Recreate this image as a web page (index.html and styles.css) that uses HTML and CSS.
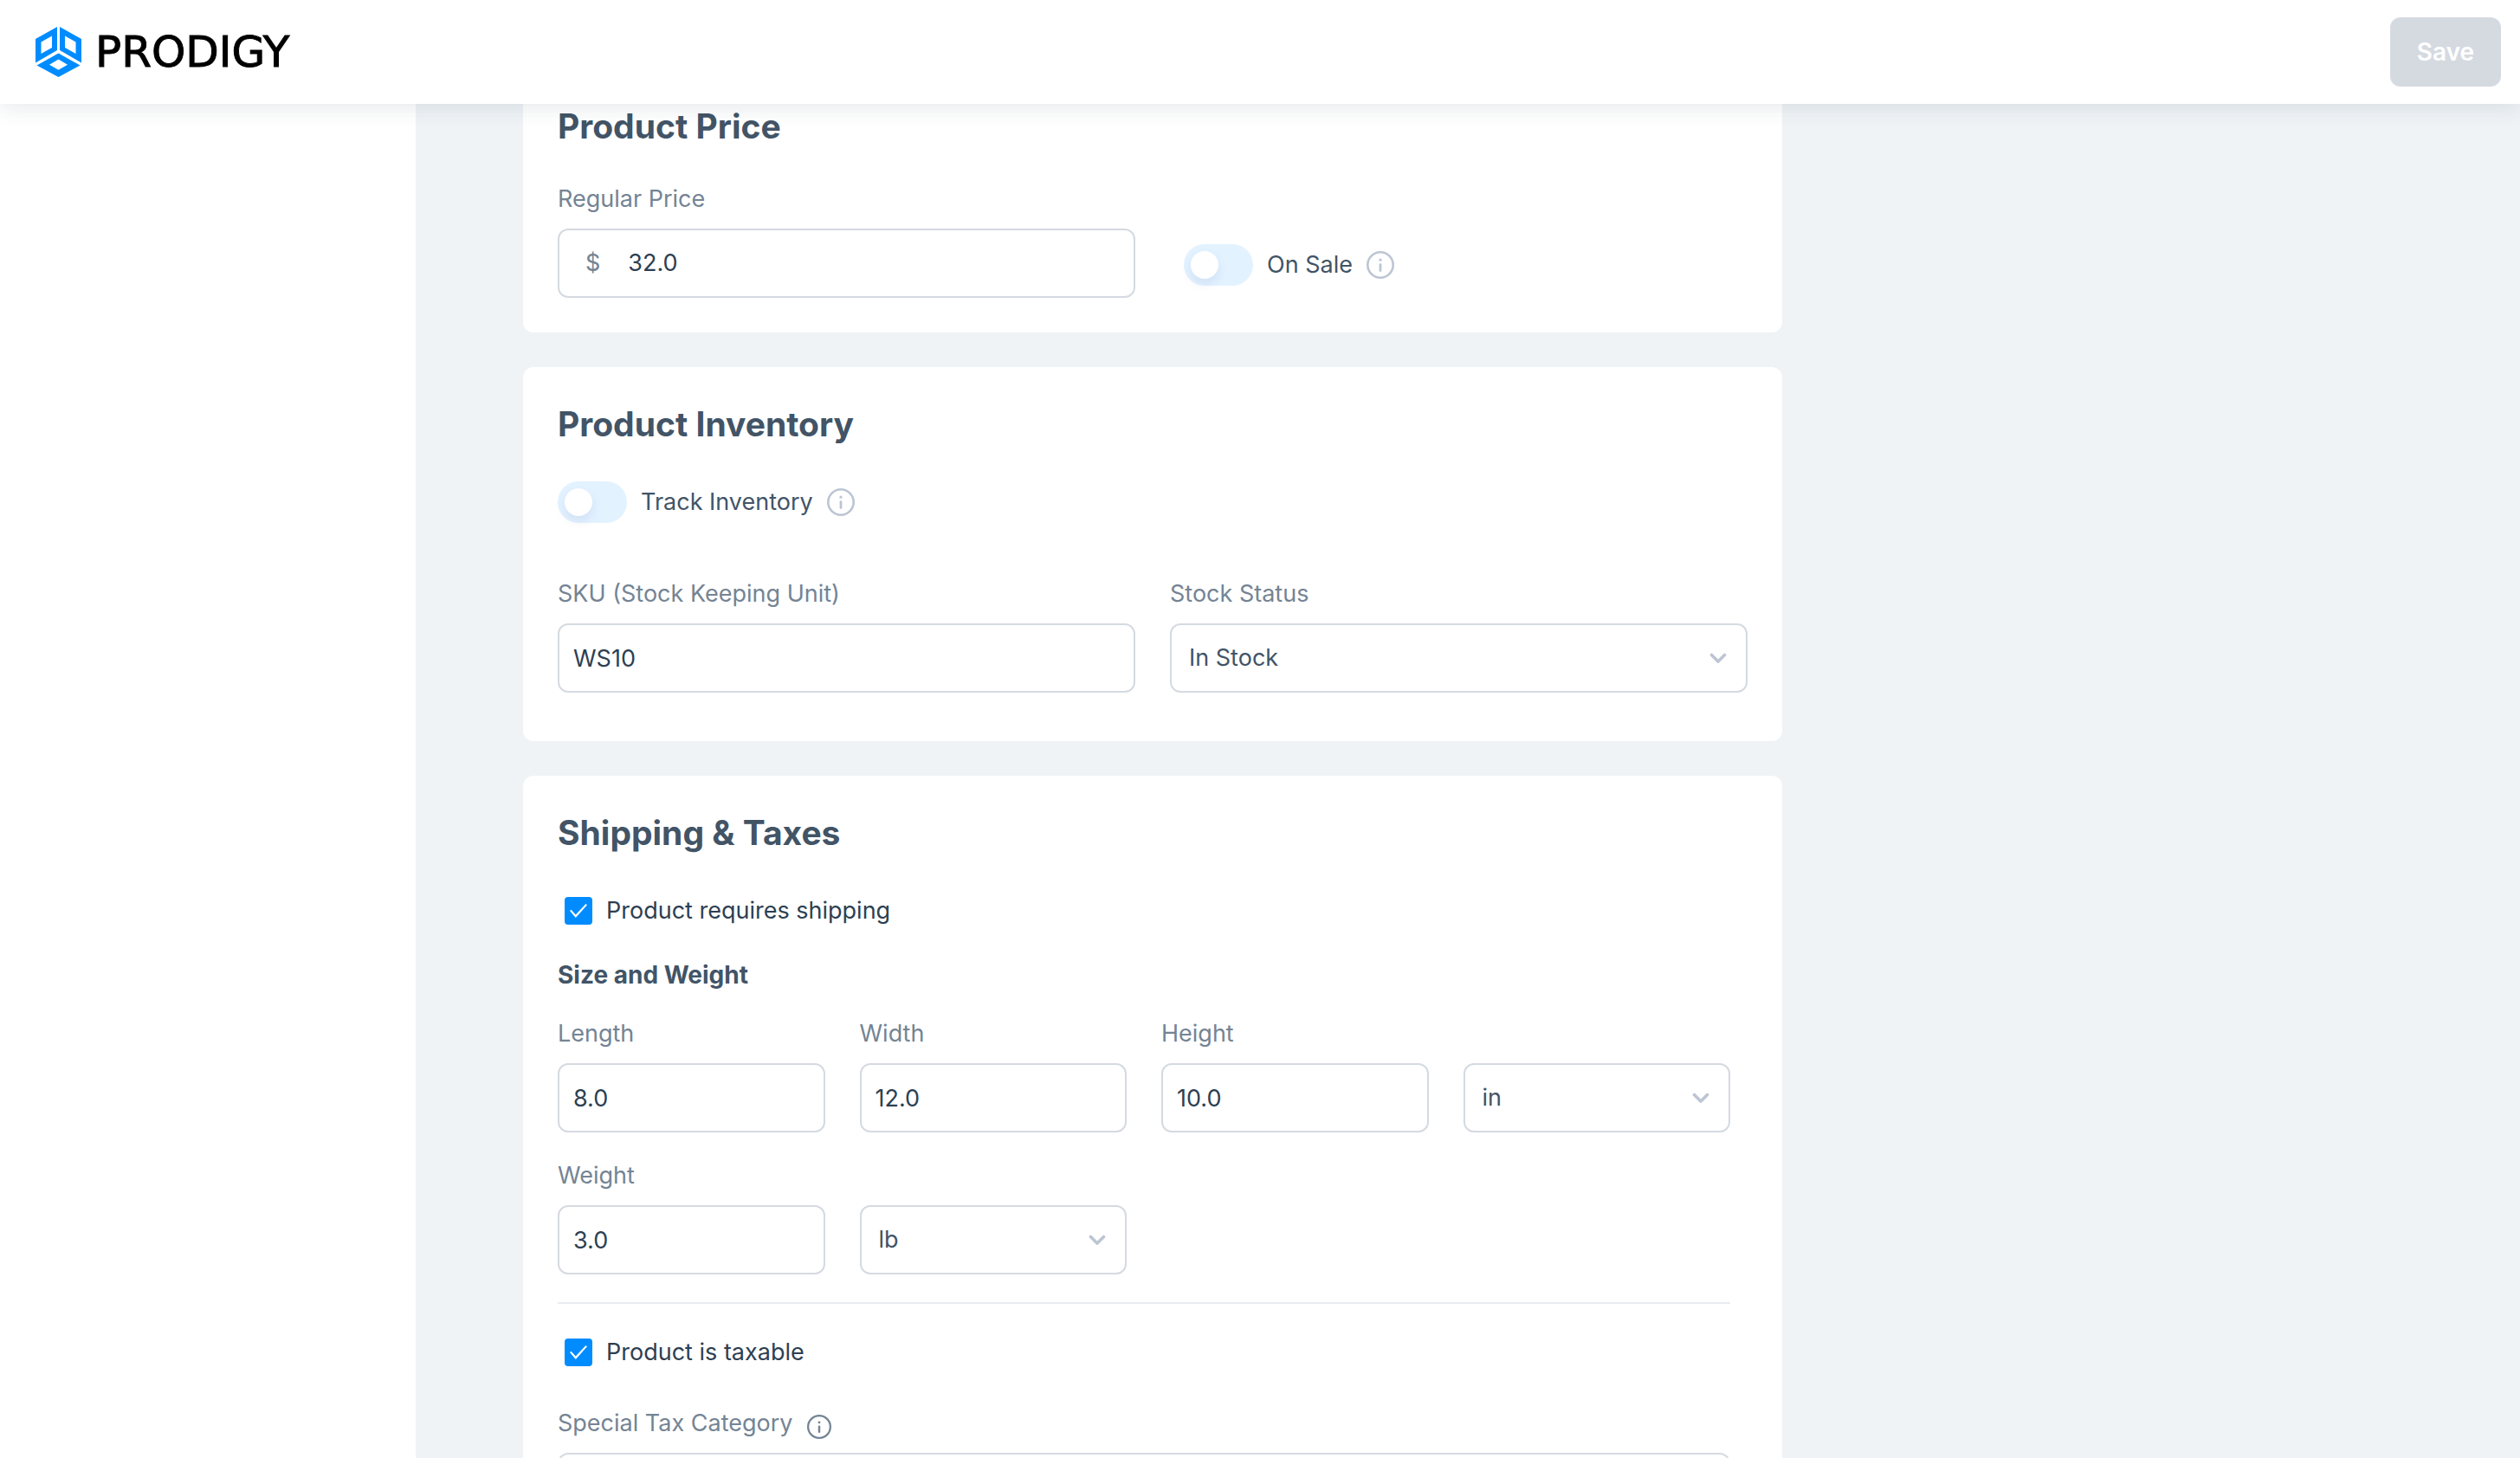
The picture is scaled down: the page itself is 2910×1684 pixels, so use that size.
FILE: index.html
```html
<!DOCTYPE html>
<html lang="en">
<head>
<meta charset="utf-8">
<meta name="viewport" content="width=device-width, initial-scale=1">
<title>Prodigy – Edit product</title>
<link rel="stylesheet" href="styles.css">
</head>
<body>
<svg class="sprite" aria-hidden="true">
  <symbol id="icon-info" viewBox="0 0 32 32">
    <circle cx="16" cy="16" r="14.7" fill="none" stroke="currentColor" stroke-width="2.6"/>
    <circle cx="16" cy="10.2" r="1.6" fill="currentColor"/>
    <path d="M16 15.6v7" stroke="currentColor" stroke-width="2.8" stroke-linecap="round"/>
  </symbol>
  <symbol id="icon-chevron" viewBox="0 0 20 12">
    <path d="M2.500 2.500l7.500 7.500 7.500-7.500" fill="none" stroke="currentColor" stroke-width="3.600" stroke-linecap="round" stroke-linejoin="round"/>
  </symbol>
</svg>

<header class="topbar">
  <a class="brand" href="#" aria-label="Prodigy home">
    <svg class="brand-mark" viewBox="0 0 53 58" aria-hidden="true">
      <g fill="#008cff" fill-rule="evenodd">
        <path d="M25 0V27L0 41.500V14ZM19 10.500L6.500 17.500V31L19 24Z"/>
        <path d="M28 0V27L53 41.500V14ZM34 10.500L46.500 17.500V31L34 24Z"/>
        <path d="M26.500 30.500L51.500 44.500L26.500 58L1.500 44.500ZM26.500 37.500L16 43.700L26.500 49.700L37 43.700Z"/>
      </g>
    </svg>
    <span class="brand-name">PRODIGY</span>
  </a>
  <button class="save" type="submit" form="product-form" disabled>Save</button>
</header>

<div class="workspace">
  <nav class="sidebar" aria-label="Product sections"></nav>
  <main class="content">
    <form class="cards" id="product-form">

      <section class="card card-continued">
        <h2 class="card-title">Product Price</h2>
        <div class="halves">
          <div class="field">
            <label class="label" for="price">Regular Price</label>
            <div class="money">
              <span class="currency">$</span>
              <input class="money-input" id="price" type="text" value="32.0">
            </div>
          </div>
          <div class="switch-row switch-beside">
            <input class="switch" id="on-sale" type="checkbox">
            <label class="switch-label" for="on-sale">On Sale</label>
            <svg class="info" aria-hidden="true"><use href="#icon-info"/></svg>
          </div>
        </div>
      </section>

      <section class="card card-inventory">
        <h2 class="card-title">Product Inventory</h2>
        <div class="switch-row">
          <input class="switch" id="track" type="checkbox">
          <label class="switch-label" for="track">Track Inventory</label>
          <svg class="info" aria-hidden="true"><use href="#icon-info"/></svg>
        </div>
        <div class="halves">
          <div class="field">
            <label class="label" for="sku">SKU (Stock Keeping Unit)</label>
            <input class="control" id="sku" type="text" value="WS10">
          </div>
          <div class="field">
            <label class="label" for="stock">Stock Status</label>
            <div class="picker">
              <select class="control select" id="stock"><option>In Stock</option><option>Out of Stock</option></select>
              <svg class="chevron" aria-hidden="true"><use href="#icon-chevron"/></svg>
            </div>
          </div>
        </div>
      </section>

      <section class="card card-shipping">
        <h2 class="card-title">Shipping &amp; Taxes</h2>
        <div class="check-row">
          <input class="check" id="ships" type="checkbox" checked>
          <label class="check-label" for="ships">Product requires shipping</label>
        </div>
        <h3 class="subtitle">Size and Weight</h3>
        <div class="quarters">
          <div class="field">
            <label class="label" for="length">Length</label>
            <input class="control" id="length" type="text" value="8.0">
          </div>
          <div class="field">
            <label class="label" for="width">Width</label>
            <input class="control" id="width" type="text" value="12.0">
          </div>
          <div class="field">
            <label class="label" for="height">Height</label>
            <input class="control" id="height" type="text" value="10.0">
          </div>
          <div class="picker">
            <select class="control select" aria-label="Size unit"><option>in</option><option>cm</option></select>
            <svg class="chevron" aria-hidden="true"><use href="#icon-chevron"/></svg>
          </div>
          <div class="field">
            <label class="label" for="weight">Weight</label>
            <input class="control" id="weight" type="text" value="3.0">
          </div>
          <div class="picker">
            <select class="control select" aria-label="Weight unit"><option>lb</option><option>kg</option></select>
            <svg class="chevron" aria-hidden="true"><use href="#icon-chevron"/></svg>
          </div>
        </div>
        <hr class="divider">
        <div class="check-row">
          <input class="check" id="taxable" type="checkbox" checked>
          <label class="check-label" for="taxable">Product is taxable</label>
        </div>
        <div class="field tax-field">
          <div class="label-row">
            <label class="label" for="tax">Special Tax Category</label>
            <svg class="info info-small" aria-hidden="true"><use href="#icon-info"/></svg>
          </div>
          <div class="picker">
            <select class="control select" id="tax"><option>None</option></select>
            <svg class="chevron" aria-hidden="true"><use href="#icon-chevron"/></svg>
          </div>
        </div>
      </section>

    </form>
  </main>
</div>
</body>
</html>
```
FILE: styles.css
```css
* { box-sizing: border-box; }

body {
  margin: 0;
  height: 100vh;
  display: flex;
  flex-direction: column;
  overflow: hidden;
  background: #eff3f6;
  color: #425466;
  font: 400 27px/36px Inter, "Liberation Sans", sans-serif;
}

.sprite { position: absolute; width: 0; height: 0; }

/* Top bar */
.topbar {
  position: relative;
  z-index: 1;
  flex: none;
  display: flex;
  align-items: center;
  justify-content: space-between;
  height: 120px;
  padding: 0 22px 0 41px;
  background: #fff;
  box-shadow: 0 4px 24px rgba(45, 63, 82, 0.12);
}
.brand {
  display: flex;
  align-items: center;
  gap: 16px;
  color: #000;
  text-decoration: none;
}
.brand-mark { width: 53px; height: 58px; }
.brand-name { font: 400 50px/60px "DejaVu Sans", sans-serif; -webkit-text-stroke: 1px #000; }
.save {
  width: 128px;
  height: 80px;
  border: 0;
  border-radius: 12px;
  background: #d5dae1;
  color: #fff;
  font: 600 28px/36px Inter, "Liberation Sans", sans-serif;
}

/* Page frame */
.workspace { flex: 1; display: flex; min-height: 0; }
.sidebar { flex: none; width: 480px; background: #fff; }
.content { flex: 1; min-width: 0; overflow: hidden; padding: 0 124px; }
.cards { display: flex; flex-direction: column; gap: 40px; max-width: 1454px; }

.card { padding: 40px; border-radius: 12px; background: #fff; }
.card-continued { padding-top: 0; border-radius: 0 0 12px 12px; }
.card-inventory { padding-bottom: 56px; }
.card-shipping { padding-right: 60px; }
.card-title { margin: 0 0 40px; font-size: 39px; line-height: 52px; font-weight: 700; }
.subtitle { margin: 0 0 32px; font-size: 28px; line-height: 36px; font-weight: 700; }

/* Fields */
.halves { display: grid; grid-template-columns: 1fr 1fr; gap: 40px; align-items: end; }
.quarters { display: grid; grid-template-columns: repeat(4, 1fr); gap: 32px 40px; align-items: end; }
.field { display: flex; flex-direction: column; gap: 16px; }
.label { color: #748494; }
.label-row { display: flex; align-items: flex-end; gap: 16px; color: #748494; }

.control, .money {
  width: 100%;
  height: 80px;
  border: 2px solid #d5dae1;
  border-radius: 12px;
  background: #fff;
}
.control { padding: 0 16px; color: #2d3f52; font: inherit; }
.money { display: flex; align-items: center; gap: 32px; padding: 0 16px 0 30px; }
.currency { color: #748494; }
.money-input { flex: 1; min-width: 0; border: 0; padding: 0; background: none; color: #2d3f52; font: inherit; }

.picker { display: grid; align-items: center; }
.picker > * { grid-area: 1 / 1; }
.select { appearance: none; padding: 0 56px 0 20px; color: #425466; }
.chevron { justify-self: end; width: 20px; height: 12px; margin-right: 24px; color: #bcc5d3; pointer-events: none; }

/* Switches */
.switch-row { display: flex; align-items: center; gap: 16px; height: 48px; }
.switch-row + .halves { margin-top: 64px; }
.switch-beside { margin: 0 0 14px 16px; }
.switch {
  appearance: none;
  display: flex;
  align-items: center;
  width: 80px;
  height: 48px;
  margin: 0;
  padding: 8px;
  border-radius: 24px;
  background: #e3f2ff;
}
.switch::before {
  content: "";
  width: 32px;
  height: 32px;
  border-radius: 50%;
  background: #fff;
  box-shadow: 0 6px 12px rgba(60, 80, 160, 0.1);
}
.info { width: 32px; height: 32px; color: #bcc5d3; }
.info-small { width: 28px; height: 28px; color: #748494; }

/* Tick boxes */
.check-row { display: flex; align-items: center; gap: 16px; height: 32px; margin: 48px 0 40px 8px; }
.check {
  appearance: none;
  display: grid;
  place-items: center;
  width: 32px;
  height: 32px;
  margin: 0;
  border-radius: 4px;
}
.check:checked { background: #008cff; }
.check:checked::before {
  content: "";
  width: 20px;
  height: 16px;
  background: #fff;
  clip-path: polygon(0 50%, 8% 42%, 34% 78%, 92% 0, 100% 8%, 34% 100%);
}
.check-label { color: #2d3f52; }
.divider { height: 2px; margin: 32px 0 40px; border: 0; background: #e8ecf0; }
.divider + .check-row { margin-top: 0; }
.tax-field { margin-top: 48px; }
```
